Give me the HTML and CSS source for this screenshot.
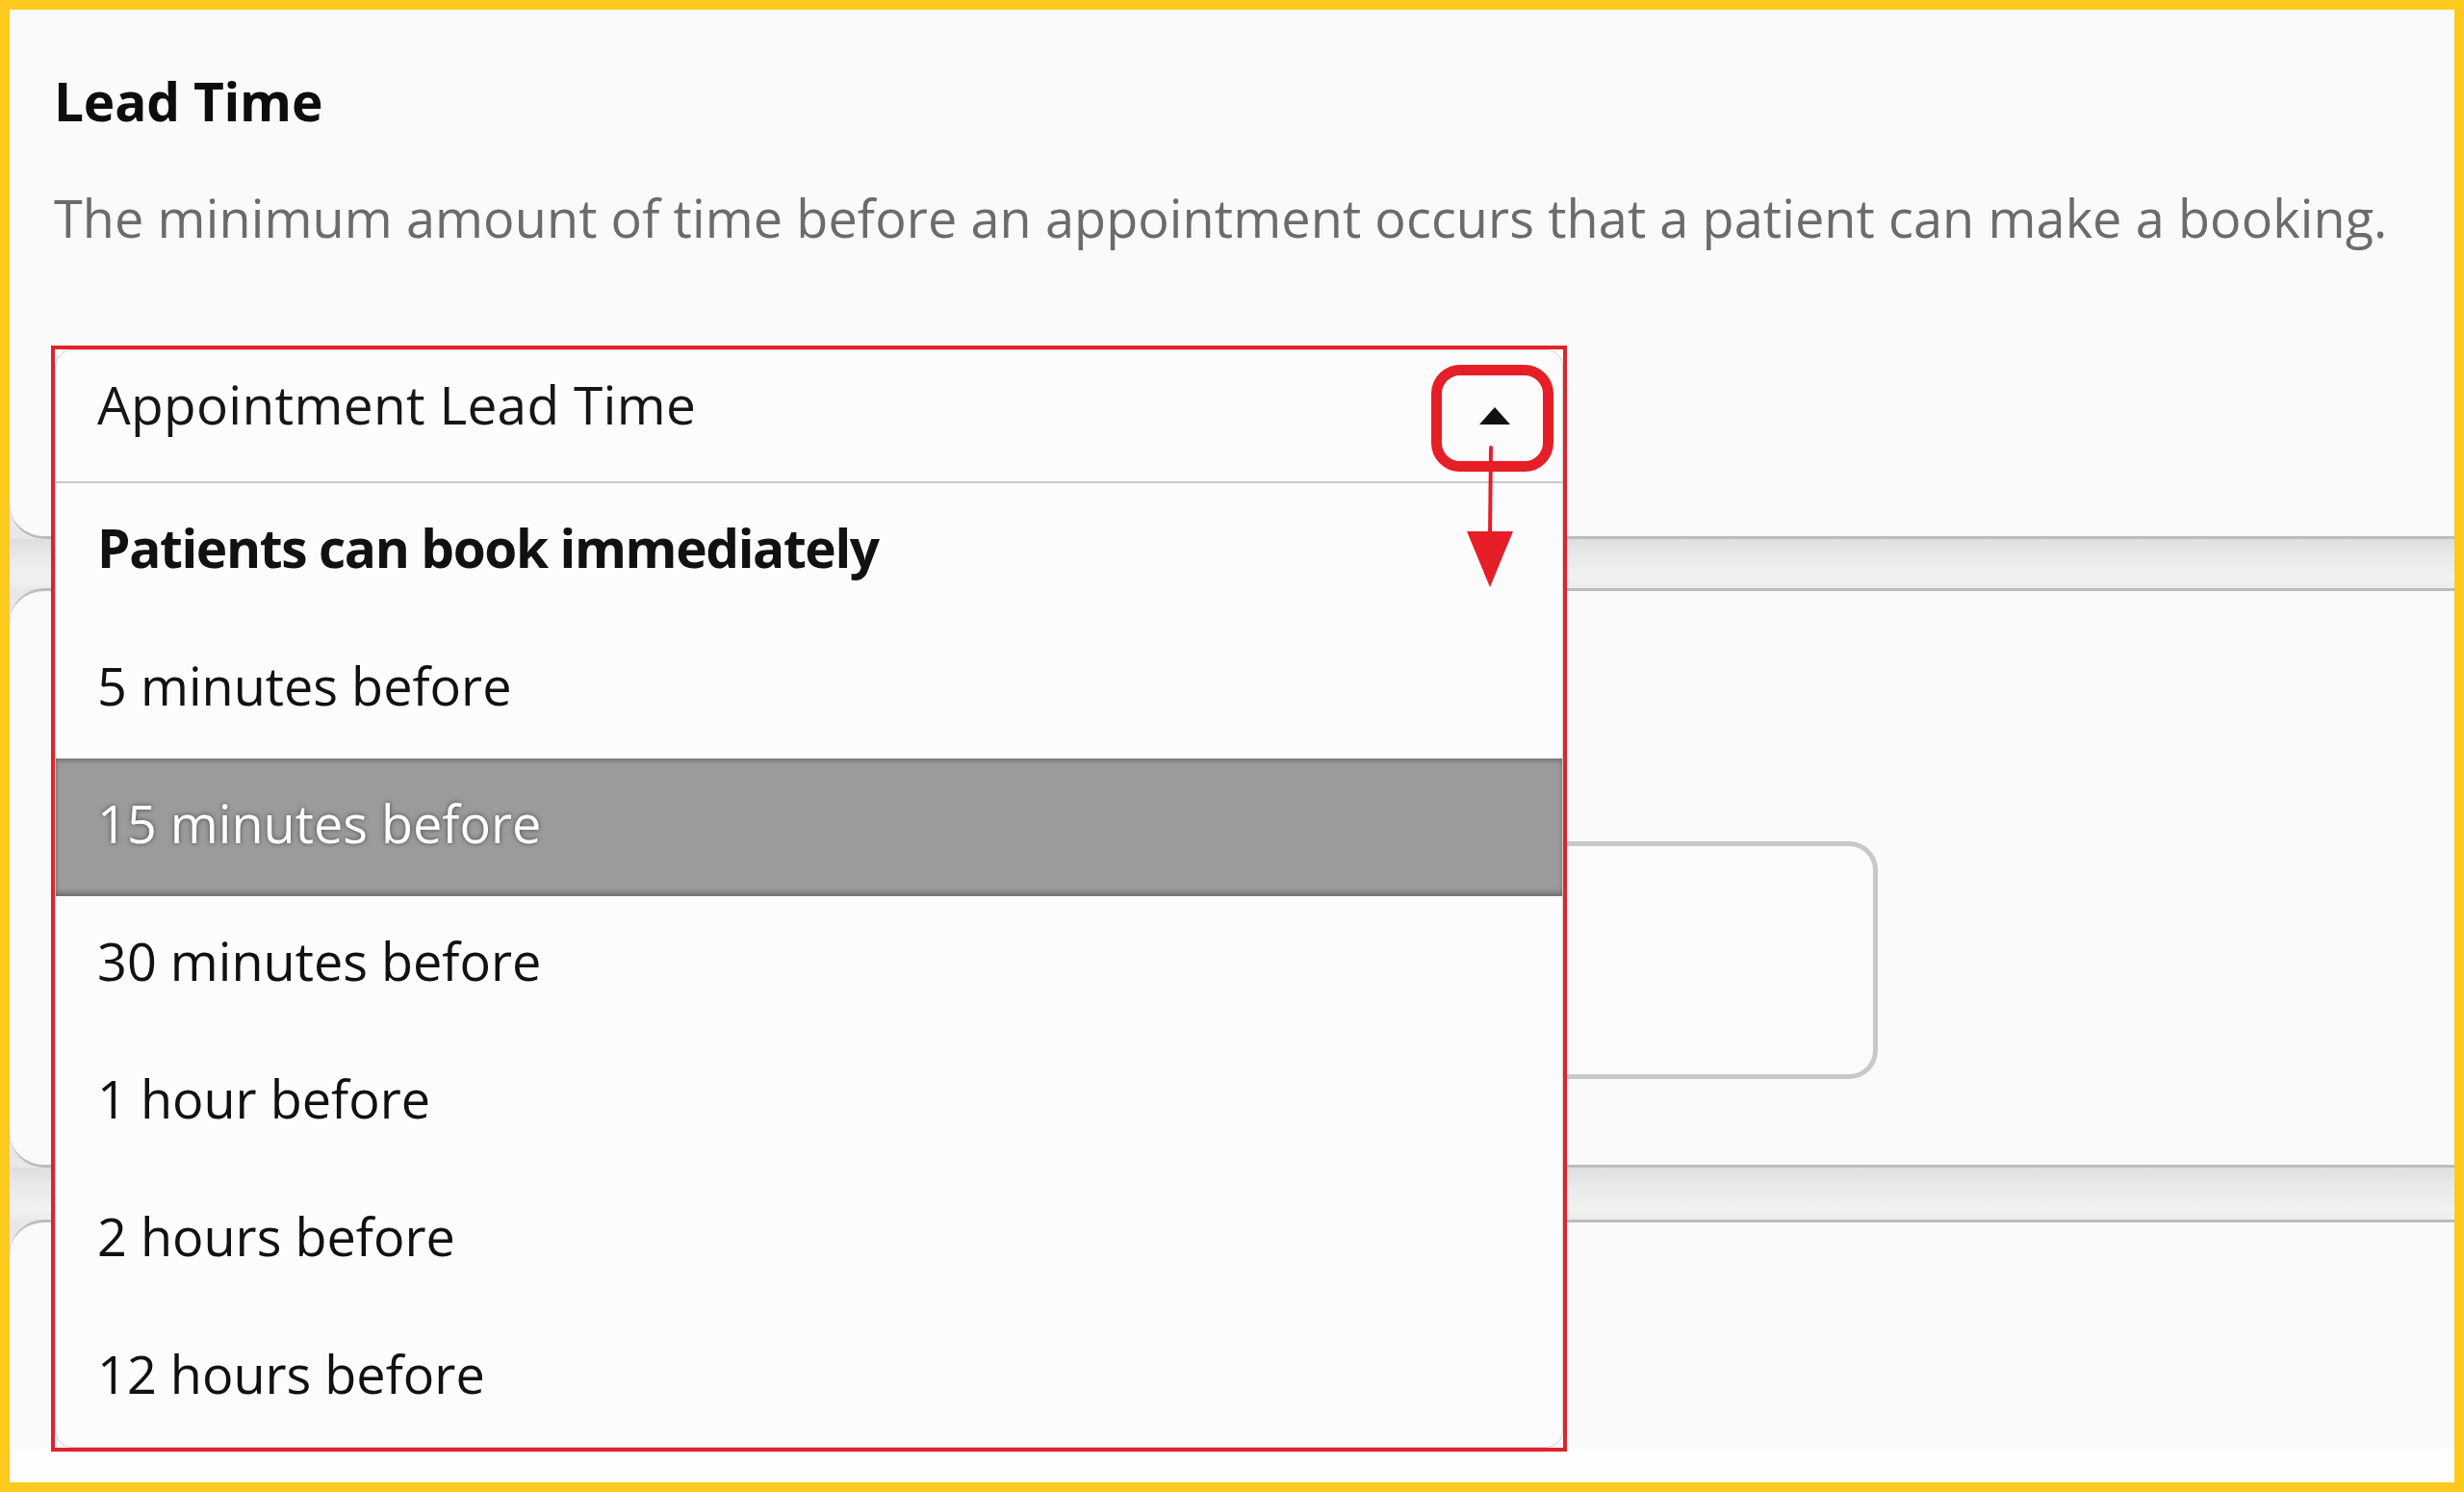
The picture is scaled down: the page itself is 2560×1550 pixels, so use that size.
FILE: index.html
```html
<!DOCTYPE html>
<html lang="en">
<head>
<meta charset="utf-8">
<title>Lead Time</title>
<link rel="stylesheet" href="styles.css">
</head>
<body>
<div class="frame">
  <div class="page">
    <section class="card card-lead">
      <h2 class="title">Lead Time</h2>
      <p class="desc">The minimum amount of time before an appointment occurs that a patient can make a booking.</p>
      <div class="annot">
        <div class="select">
          <div class="select-head">
            <span class="select-label">Appointment Lead Time</span>
            <svg class="caret" width="32" height="18" viewBox="0 0 32 18"><polygon points="16,0 32,18 0,18" fill="#111"/></svg>
          </div>
          <ul class="menu">
            <li class="opt opt-bold">Patients can book immediately</li>
            <li class="opt">5 minutes before</li>
            <li class="opt opt-active">15 minutes before</li>
            <li class="opt">30 minutes before</li>
            <li class="opt">1 hour before</li>
            <li class="opt">2 hours before</li>
            <li class="opt">12 hours before</li>
          </ul>
        </div>
        <div class="annot-ring"></div>
        <svg class="annot-arrow" width="70" height="160" viewBox="0 0 70 160">
          <line x1="32" y1="7" x2="31" y2="100" stroke="#e61e27" stroke-width="4" stroke-linecap="round"/>
          <polygon points="7,94 55,94 31,152" fill="#e61e27"/>
        </svg>
      </div>
    </section>
    <div class="band band-1"></div>
    <section class="card card-mid">
      <div class="field"></div>
    </section>
    <div class="band band-2"></div>
    <section class="card card-last"></section>
    <div class="page-foot"></div>
  </div>
</div>
</body>
</html>
```

FILE: styles.css
```css
html, body {
  margin: 0;
  padding: 0;
}

body {
  font-family: "Open Sans", "Noto Sans", sans-serif;
}

.frame {
  width: 2560px;
  height: 1550px;
  box-sizing: border-box;
  padding: 10px;
  background: #fdca1d;
}

.page {
  height: 1530px;
  background: #e8e8e8;
  display: flex;
  flex-direction: column;
  overflow: hidden;
}

.card {
  background: #fafafa;
  box-sizing: border-box;
  flex: none;
}

.card-lead {
  height: 550px;
  padding: 59px 0 0 46px;
  border-bottom: 3px solid #bcbcbc;
  border-radius: 0 0 0 36px;
}

.title {
  margin: 0;
  font-size: 55px;
  line-height: 72px;
  font-weight: 700;
  color: #0d0d0d;
  letter-spacing: -0.2px;
}

.desc {
  margin: 49px 0 0;
  font-size: 54px;
  line-height: 72px;
  font-weight: 400;
  color: #6b6b6b;
  white-space: nowrap;
  letter-spacing: 0.1px;
}

.annot {
  position: relative;
  z-index: 10;
  margin: 97px 0 0 -3px;
  width: 1575px;
  box-sizing: border-box;
  border: 4px solid #e2222b;
}

.select {
  background: #fcfcfc;
  border: 1px solid #d3d3d3;
  border-radius: 18px;
  overflow: hidden;
}

.select-head {
  height: 136px;
  display: flex;
  align-items: center;
  justify-content: space-between;
  padding: 0 54px 0 43px;
  border-bottom: 2px solid #c9c9c9;
}

.select-label {
  font-size: 55px;
  line-height: 72px;
  color: #161616;
  margin-bottom: 24px;
  letter-spacing: 0.3px;
}

.caret {
  display: block;
}

.menu {
  list-style: none;
  margin: 0;
  padding: 0;
}

.opt {
  height: 143px;
  box-sizing: border-box;
  display: flex;
  align-items: center;
  padding: 0 0 10px 43px;
  font-size: 54px;
  line-height: 72px;
  color: #111111;
}

.opt-bold {
  font-weight: 700;
  font-size: 55px;
  letter-spacing: -1.4px;
}

.opt-active {
  background: #9b9b9b;
  color: #ffffff;
  text-shadow: 0 0 5px rgba(0, 0, 0, 0.55);
  box-shadow: inset 0 4px 5px -2px rgba(0, 0, 0, 0.3), inset 0 -5px 6px -2px rgba(0, 0, 0, 0.35);
}

.annot-ring {
  position: absolute;
  left: 1430px;
  top: 16px;
  width: 127px;
  height: 111px;
  box-sizing: border-box;
  border: 11px solid #e61e27;
  border-radius: 30px;
}

.annot-arrow {
  position: absolute;
  left: 1460px;
  top: 95px;
}

.band {
  flex: none;
  background: linear-gradient(#dedede, #e9e9e9 35%, #f1f1f1 80%, #ececec);
}

.band-1 {
  height: 51px;
}

.band-2 {
  height: 54px;
}

.card-mid {
  height: 602px;
  border-top: 3px solid #bcbcbc;
  border-bottom: 3px solid #bcbcbc;
  border-radius: 36px 0 0 36px;
  padding: 260px 0 0 90px;
}

.field {
  width: 1851px;
  height: 247px;
  box-sizing: border-box;
  border: 5px solid #c8c8c8;
  border-radius: 30px;
  background: #fbfbfb;
}

.card-last {
  height: 238px;
  border-top: 3px solid #bcbcbc;
  border-radius: 36px 0 0 0;
}

.page-foot {
  flex: 1;
  background: #fefefe;
}
```
